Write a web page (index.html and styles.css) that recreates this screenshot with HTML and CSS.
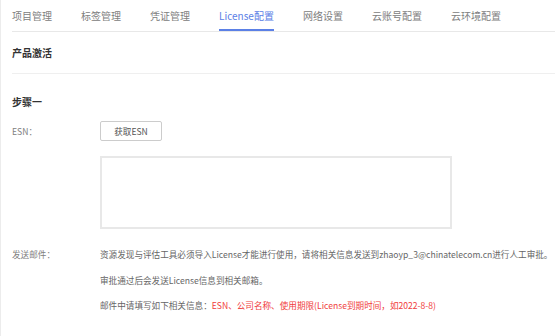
FILE: index.html
```html
<!DOCTYPE html>
<html lang="zh-CN">
<head>
  <meta charset="UTF-8" />
  <title>License配置</title>
  <link rel="stylesheet" href="styles.css">
</head>
<body>
  <div class="page">
    <div class="tabs">
      <a class="tab">项目管理</a>
      <a class="tab">标签管理</a>
      <a class="tab">凭证管理</a>
      <a class="tab active">License配置</a>
      <a class="tab">网络设置</a>
      <a class="tab">云账号配置</a>
      <a class="tab">云环境配置</a>
    </div>

    <h3 class="section-title">产品激活</h3>

    <h4 class="step-title">步骤一</h4>

    <div class="form-row esn-row">
      <label class="form-label">ESN：</label>
      <button class="btn">获取ESN</button>
    </div>

    <div class="form-row area-row">
      <span class="form-label"></span>
      <textarea class="esn-box"></textarea>
    </div>

    <div class="form-row mail-row">
      <label class="form-label">发送邮件：</label>
      <div class="mail-text">
        <p>资源发现与评估工具必须导入License才能进行使用，请将相关信息发送到zhaoyp_3@chinatelecom.cn进行人工审批。</p>
        <p>审批通过后会发送License信息到相关邮箱。</p>
        <p>邮件中请填写如下相关信息：<span class="red">ESN、公司名称、使用期限(License到期时间，如2022-8-8)</span></p>
      </div>
    </div>
  </div>
</body>
</html>
```

FILE: styles.css
```css
body {
  margin: 0;
  font-family: 'Noto Sans CJK SC', 'Noto Sans', sans-serif;
  background: white;
  color: #555;
}
.page {
  min-height: 336px;
  box-sizing: border-box;
  border-left: 1px solid #ececec;
  padding-left: 11px;
}
.tabs {
  display: flex;
  border-bottom: 1px solid #e8e8e8;
}
.tab {
  font-size: 10px;
  line-height: 14px;
  padding: 9px 0 6px;
  margin-right: 29px;
  color: #808080;
  border-bottom: 2px solid transparent;
  white-space: nowrap;
}
.tab.active {
  color: #5b80e6;
  border-bottom-color: #5b80e6;
}
.section-title {
  margin: 14px 0 0;
  padding-bottom: 13px;
  font-size: 10px;
  line-height: 14px;
  color: #333;
  font-weight: 600;
  border-bottom: 1px solid #efefef;
}
.step-title {
  margin: 21px 0 0;
  font-size: 10px;
  line-height: 14px;
  color: #333;
  font-weight: 600;
}
.form-row {
  display: flex;
  align-items: flex-start;
  font-size: 8.6px;
}
.form-label {
  width: 88px;
  flex-shrink: 0;
  color: #808080;
  line-height: 14px;
}
.esn-row {
  margin-top: 12px;
  align-items: center;
}
.btn {
  width: 62px;
  height: 20px;
  padding: 0;
  background: white;
  border: 1px solid #ccc;
  border-radius: 2px;
  font-family: inherit;
  font-size: 8.6px;
  color: #555;
}
.area-row {
  margin-top: 15px;
}
.esn-box {
  width: 352px;
  height: 73px;
  box-sizing: border-box;
  border: 2px solid #e8e8e8;
  resize: none;
  margin: 0;
}
.mail-row {
  margin-top: 18px;
}
.mail-text p {
  margin: 0 0 11.5px;
  line-height: 14px;
  color: #666;
  white-space: nowrap;
}
.red {
  color: #f03c3c;
}
```
